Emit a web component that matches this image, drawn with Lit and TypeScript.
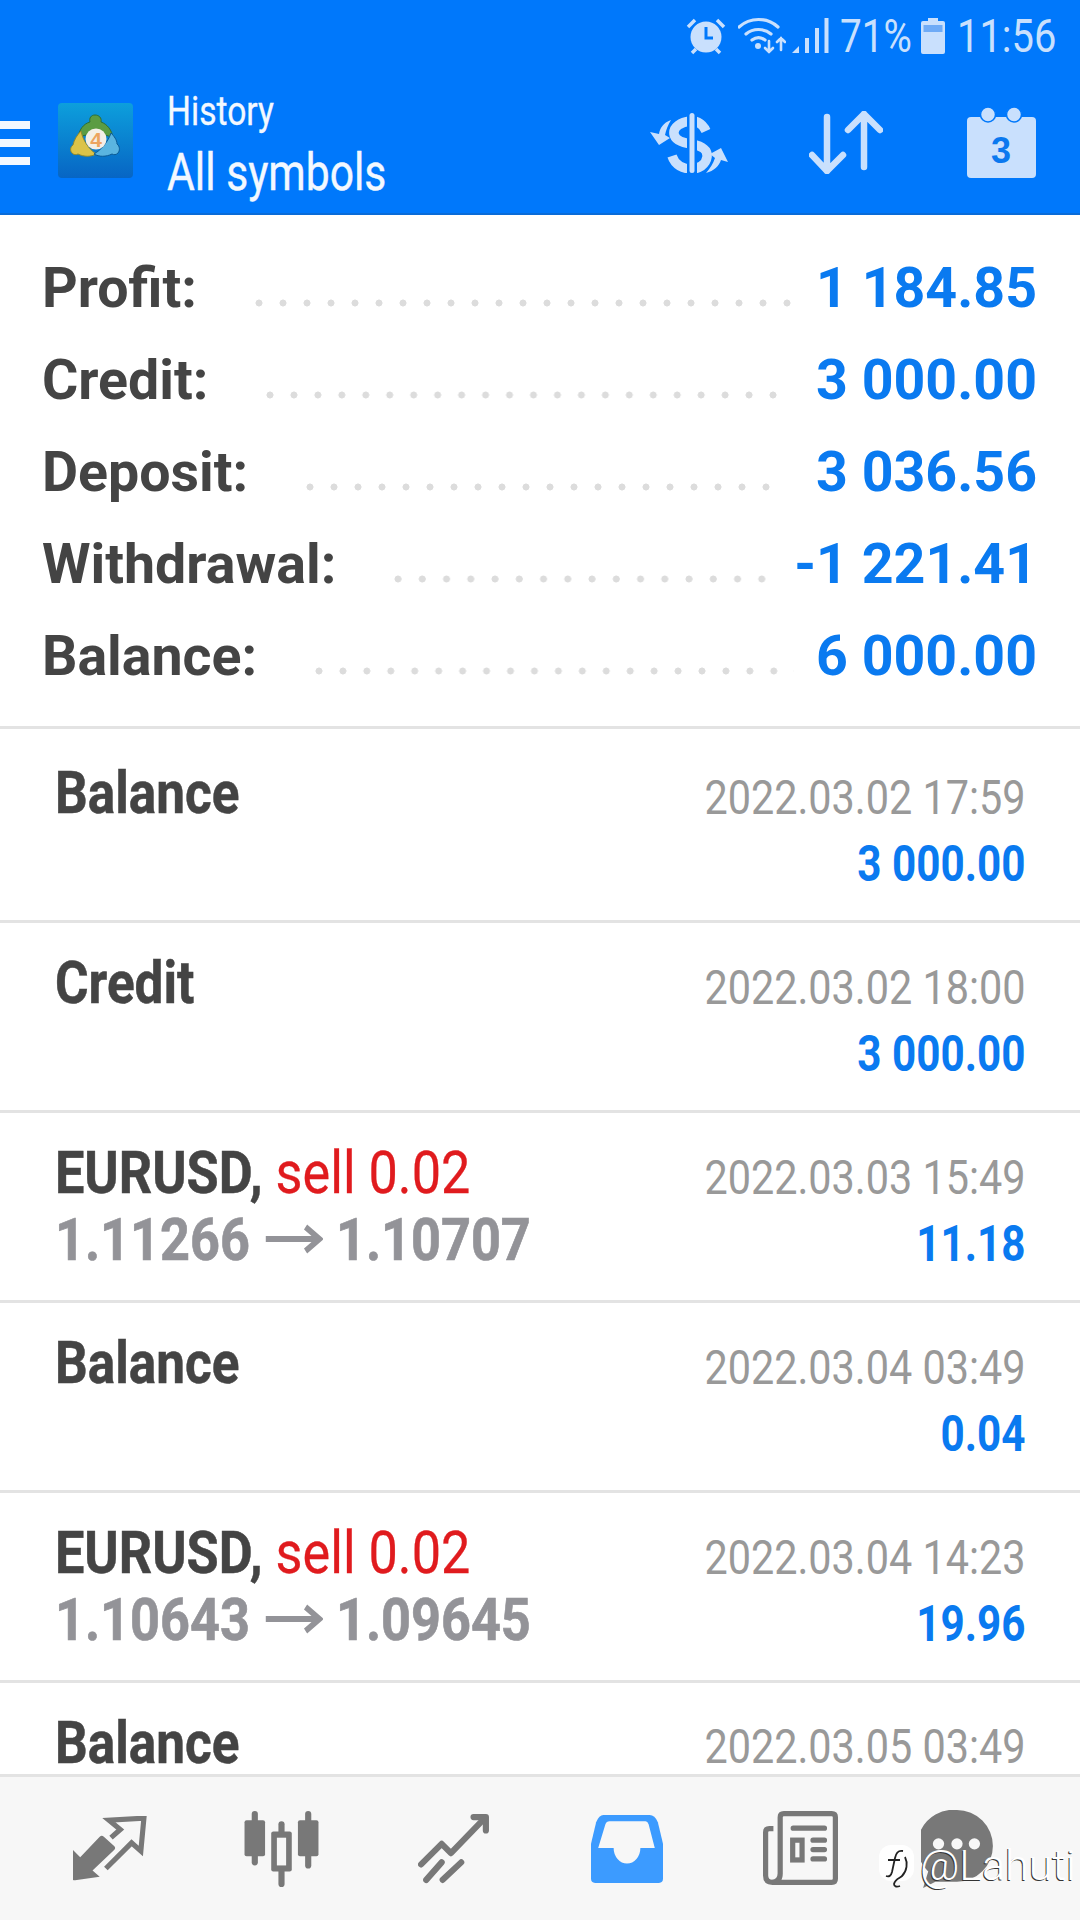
import { LitElement, css, html, svg } from "lit";
import { customElement } from "lit/decorators.js";

const summary = [
  { label: "Profit:", value: "1 184.85", pad: "p-profit" },
  { label: "Credit:", value: "3 000.00", pad: "p-credit" },
  { label: "Deposit:", value: "3 036.56", pad: "p-deposit" },
  { label: "Withdrawal:", value: "-1 221.41", pad: "p-withdrawal" },
  { label: "Balance:", value: "6 000.00", pad: "p-balance" },
];

const rows = [
  { title: "Balance", date: "2022.03.02 17:59", value: "3 000.00" },
  { title: "Credit", date: "2022.03.02 18:00", value: "3 000.00" },
  { title: "EURUSD,", side: "sell 0.02", from: "1.11266", to: "1.10707", date: "2022.03.03 15:49", value: "11.18" },
  { title: "Balance", date: "2022.03.04 03:49", value: "0.04" },
  { title: "EURUSD,", side: "sell 0.02", from: "1.10643", to: "1.09645", date: "2022.03.04 14:23", value: "19.96" },
  { title: "Balance", date: "2022.03.05 03:49", value: "", tail: true },
];

const alarmIcon = svg`<svg width="40" height="38" viewBox="0 0 40 38">
  <circle cx="20" cy="20" r="15.5" fill="#c9e0fd"/>
  <path d="M20 10v11h7" fill="none" stroke="#0078fb" stroke-width="3"/>
  <path d="M2 10 9 3M38 10 31 3M6 36l4-4M34 36l-4-4" stroke="#c9e0fd" stroke-width="3.5" fill="none"/>
</svg>`;

const wifiIcon = svg`<svg width="48" height="38" viewBox="0 0 48 38">
  <g fill="none" stroke="#c9e0fd" stroke-width="3.2" stroke-linecap="round">
    <path d="M1 10C12 0 29 0 40 10"/>
    <path d="M8 17c7-6 18-6 25 0"/>
    <path d="M14 23c4-3 9-3 13 0"/>
    <path d="M31 24v11M27 31l4 4 4-4" stroke-width="2.6"/>
    <path d="M43 33V21M39 25l4-4 4 4" stroke-width="2.6"/>
  </g>
  <circle cx="20" cy="29" r="3" fill="#c9e0fd"/>
</svg>`;

const signalIcon = svg`<svg width="38" height="38" viewBox="0 0 38 38" fill="#c9e0fd">
  <path d="M0 36 7 29v7z"/><rect x="13" y="21" width="4" height="15"/><rect x="23" y="11" width="4" height="25"/><rect x="32.500" y="1" width="4" height="35"/>
</svg>`;

const batteryIcon = svg`<svg width="24" height="36" viewBox="0 0 24 36">
  <path d="M7 0h10v3h5q2 0 2 2v29q0 2-2 2H2q-2 0-2-2V5q0-2 2-2h5z" fill="#c9e0fd"/>
  <rect x="2.500" y="7" width="19" height="7" fill="#6fabf6"/>
</svg>`;

const logoIcon = svg`<svg width="76" height="76" viewBox="0 0 76 76">
  <defs>
    <linearGradient id="lg" x1="0" y1="0" x2="0" y2="1">
      <stop offset="0" stop-color="#0d9fdc"/><stop offset="1" stop-color="#0765c4"/>
    </linearGradient>
  </defs>
  <rect width="75" height="75" rx="4" fill="url(#lg)"/>
  <path d="M37 12c-4 0-6 3-5 7-7 2-11 8-12 16 5-3 11-4 17-3 6-1 13 0 18 3-1-8-6-14-12-16 1-4-2-7-6-7z" fill="#5b9c43" stroke="#2f6f33" stroke-width="1"/>
  <path d="M23 28c-4 4-7 9-8 14-3 2-3 6-1 8 2 2 4 2 6 1 6 3 13 3 18 0-7-5-13-13-15-23z" fill="#dcc348" stroke="#8f8a2e" stroke-width="1"/>
  <path d="M53 30c3 3 6 7 6 11 3 2 3 7 1 9-2 2-4 2-6 1-6 3-13 3-18 0 7-4 14-12 17-21z" fill="#5ab4e0" stroke="#0b5a95" stroke-width="1"/>
  <circle cx="38" cy="36" r="10.500" fill="#f4efe6"/>
  <text x="38" y="44" text-anchor="middle" font-family="Liberation Sans, sans-serif" font-weight="700" font-size="21" fill="#eda45f">4</text>
</svg>`;

const dollarIcon = svg`<svg width="78" height="60" viewBox="0 0 78 60">
  <path d="M56 18C52 9 44 7 40 8 31 9 23 14 24 21c1 7 10 9 18 10 9 2 16 5 15 13-1 8-9 12-15 12-9 0-17-4-20-13" fill="none" stroke="#c9e0fd" stroke-width="9.500"/>
  <rect x="37" y="0" width="10" height="60" fill="#0078fb"/>
  <rect x="39.500" y="0" width="5" height="60" rx="2.500" fill="#c9e0fd"/>
  <path d="M0 19l9 13 11-7-5-3c1-5 3-10 6-15-8 3-11 8-12 14z" fill="#c9e0fd"/>
  <path d="M78 49 71 35l-11 6 5 4c-2 6-5 10-9 15 8-2 13-7 15-13z" fill="#c9e0fd"/>
</svg>`;

const sortIcon = svg`<svg width="74" height="63" viewBox="0 0 74 63" fill="none" stroke="#c9e0fd" stroke-width="6.500" stroke-linecap="round" stroke-linejoin="round">
  <path d="M18 6v54M3 44l15 16 16-16"/>
  <path d="M55 3v53M39 19 55 3l16 16"/>
</svg>`;

const calendarIcon = svg`<svg width="70" height="72" viewBox="0 0 70 72">
  <rect y="10" width="69" height="61" rx="4" fill="#c9e0fd"/>
  <circle cx="21" cy="7.500" r="7.500" fill="#c9e0fd" stroke="#0078fb" stroke-width="1.500"/>
  <circle cx="47" cy="7.500" r="7.500" fill="#c9e0fd" stroke="#0078fb" stroke-width="1.500"/>
  <text x="34" y="56" text-anchor="middle" font-family="Liberation Sans, sans-serif" font-weight="700" font-size="36" fill="#0a78ef">3</text>
</svg>`;

const tradeIcon = svg`<svg width="74" height="66" viewBox="0 0 72 64" fill="#787878">
  <path d="M0 62V33l7 7 19-20q2-2 4 0l10 9q2 2 0 4L19 53l7 6-24 3.500q-2 0-2-.5z"/>
  <path d="M37 21l9-8-11-9 34-2-3 32-9-8-25 25" fill="none" stroke="#787878" stroke-width="5"/>
</svg>`;

const candleIcon = svg`<svg width="75" height="76" viewBox="0 0 72 74" fill="#787878">
  <rect x="7" width="6" height="53" rx="3"/>
  <rect y="9" width="20" height="35" rx="2"/>
  <rect x="33" y="10" width="6" height="64" rx="3"/>
  <rect x="26" y="20" width="20" height="39" rx="2"/>
  <rect x="31.500" y="26" width="9" height="27" fill="#f7f7f7"/>
  <rect x="59" width="6" height="56" rx="3"/>
  <rect x="52" y="9" width="20" height="35" rx="2"/>
</svg>`;

const chartIcon = svg`<svg width="72" height="70" viewBox="0 0 70 68" fill="none" stroke="#787878" stroke-width="6" stroke-linecap="round" stroke-linejoin="round">
  <path d="M3 49 23 29l9 9 31-32"/>
  <path d="M54 3h12v13"/>
  <path d="M8 64 23 47M24 64 42 47"/>
</svg>`;

const inboxIcon = svg`<svg width="72" height="68" viewBox="0 0 70 66">
  <path d="M12 0H57q5 0 8 7l5 21V62q0 4-4 4H4q-4 0-4-4V28L5 7Q8 0 12 0z" fill="#3c9bff"/>
  <path d="M18 6H53q2 0 3 3l6 23H48a13 15 0 0 1-26 0H7L14 9q1-3 4-3z" fill="#f7f7f7"/>
</svg>`;

const newsIcon = svg`<svg width="75" height="75" viewBox="0 0 72 72" fill="none" stroke="#787878" stroke-width="5">
  <path d="M10 17H6q-3.500 0-3.500 3.500V62q0 6.500 6.500 6.500H66q3.500 0 3.500-3.500V6q0-3.500-3.500-3.500H20q-3.500 0-3.500 3.500V60q0 8-8 8.500"/>
  <path d="M29 16.500h30M48 28h11M48 37h11M48 46h11" stroke-linecap="round"/>
  <rect x="28.500" y="28" width="9" height="19" stroke-width="5"/>
</svg>`;

const chatIcon = svg`<svg width="74" height="78" viewBox="0 0 72 76">
  <path d="M35 0a35 35 0 0 1 0 70H14L2 76l5-16A35 35 0 0 1 35 0z" fill="#787878"/>
  <circle cx="17" cy="33" r="5.500" fill="#f7f7f7"/><circle cx="35" cy="33" r="5.500" fill="#f7f7f7"/><circle cx="52" cy="33" r="5.500" fill="#f7f7f7"/>
</svg>`;

const markIcon = svg`<svg width="36" height="46" viewBox="0 0 36 46">
  <rect width="35" height="36" rx="12" fill="#fff"/>
  <path d="M24 6c-5-1-7 2-8 7l-3 14c-1 4-3 5-6 4M9 15h12M26 12c3 6 2 14-3 19-2 2-7 3-8 8 0 3 3 3 6 2" fill="none" stroke="#222" stroke-width="1.800"/>
</svg>`;

const arrowIcon = svg`<svg class="arrow" width="66" height="30" viewBox="0 0 66 30" fill="none" stroke="#939398" stroke-width="6">
  <path d="M0 15h62M46 3l16 12-16 12"/>
</svg>`;

@customElement("app-root")
export class AppRoot extends LitElement {
  static styles = css`
    :host {
      display: block;
      width: 1080px;
      height: 1920px;
      font-family: Roboto, "Liberation Sans", sans-serif;
      background: #fff;
      overflow: hidden;
    }
    .page {
      position: relative;
      display: flex;
      flex-direction: column;
      height: 1920px;
    }
    .c {
      display: inline-block;
      white-space: nowrap;
      transform-origin: left center;
    }
    .top {
      background: #0078fb;
      border-bottom: 2px solid #0a6cd8;
    }
    .status {
      display: flex;
      justify-content: flex-end;
      align-items: center;
      height: 72px;
      padding-right: 26px;
      color: #c9e0fd;
    }
    .status svg { display: block; }
    .s-alarm { margin-right: 12px; }
    .s-wifi { margin-right: 6px; }
    .s-pct {
      width: 81px;
      margin-left: 10px;
      font-size: 46px;
      line-height: 72px;
      transform: scaleX(.842);
    }
    .s-time {
      width: 97px;
      margin-left: 12px;
      font-size: 46px;
      line-height: 72px;
      transform: scaleX(.867);
    }
    .bar {
      display: flex;
      align-items: center;
      height: 141px;
    }
    .burger {
      display: flex;
      flex-direction: column;
      gap: 10px;
      width: 30px;
      margin-right: 28px;
    }
    .burger i {
      display: block;
      height: 8px;
      background: #f3f8ff;
    }
    .logo { display: block; margin-right: 33px; }
    .titles { color: #f3f8ff; flex: 1; padding-top: 7px; }
    .t1 {
      font-size: 40px;
      line-height: 46px;
      transform: scaleX(.84);
      -webkit-text-stroke: .3px currentColor;
    }
    .t2 {
      display: block;
      margin-top: 7px;
      font-size: 52px;
      line-height: 62px;
      transform: scaleX(.82);
      -webkit-text-stroke: .4px currentColor;
    }
    .actions {
      display: flex;
      align-items: center;
      padding-right: 43px;
    }
    .actions svg { display: block; }
    .a-sort { margin: 0 84px 0 81px; }
    .summary {
      padding: 27px 43px 24px 42px;
      border-bottom: 3px solid #e3e3e3;
    }
    .sum-row {
      display: flex;
      align-items: center;
      height: 92px;
      font-weight: 700;
      font-size: 55.5px;
    }
    .sum-label { color: #444; }
    .sum-value { color: #0a7af0; }
    .dots {
      flex: 1;
      align-self: flex-end;
      height: 8px;
      margin: 0 9px 27px 58px;
      background: radial-gradient(circle at 4px 4px, #dcdcdc 3.2px, transparent 3.8px) left center / 24px 8px round no-repeat;
    }
    .p-credit .dots { margin-right: 23px; }
    .p-deposit .dots { margin-right: 30px; }
    .p-withdrawal .dots { margin-right: 12px; }
    .p-balance .dots { margin-right: 22px; }
    .list { flex: 1; padding-top: 4px; }
    .row {
      display: flex;
      justify-content: space-between;
      box-sizing: border-box;
      height: 190px;
      padding: 23px 54px 0 55px;
      border-bottom: 3px solid #e3e3e3;
    }
    .lines { font-size: 60px; line-height: 66px; padding-top: 4px; }
    .name {
      display: block;
      font-weight: 700;
      color: #444;
      transform: scaleX(.87);
      -webkit-text-stroke: .5px currentColor;
    }
    .single .name { transform: scaleX(.855); }
    .sell { font-weight: 400; color: #e01b1e; -webkit-text-stroke: .3px currentColor; }
    .price {
      display: block;
      margin-top: 1px;
      font-weight: 700;
      color: #939398;
      transform: scaleX(.87);
      -webkit-text-stroke: .7px currentColor;
    }
    .arrow {
      margin: 0 15px 0 18px;
      vertical-align: 6px;
    }
    .meta { text-align: right; }
    .meta .c { transform-origin: right center; }
    .date {
      display: block;
      font-size: 48px;
      line-height: 67px;
      margin-top: 8px;
      color: #999;
      transform: scaleX(.862);
    }
    .amount {
      display: block;
      font-size: 50px;
      font-weight: 700;
      line-height: 67px;
      color: #0a7af0;
      transform: scaleX(.845);
    }
    /* last row runs into the nav, keep its line boxes inside the list */
    .tail { height: 90px; border-bottom: none; }
    .tail .lines { line-height: 50px; padding-top: 12px; }
    .tail .date { line-height: 50px; margin-top: 16px; }
    .nav {
      display: grid;
      grid-template-columns: 180px 163px 182px 164px 182px 134px;
      align-items: center;
      justify-items: center;
      height: 143px;
      padding-left: 20px;
      background: #f7f7f7;
      border-top: 3px solid #e3e3e3;
    }
    .nav svg { display: block; }
    .mark {
      position: absolute;
      left: 879px;
      top: 1845px;
      display: flex;
      gap: 5px;
      color: #fff;
      font-size: 43px;
      font-weight: 300;
      line-height: 40px;
      text-shadow: -1px 1px 0 #333;
    }
    .mark svg { display: block; }
  `;

  renderRow(r: any) {
    return html`<div class="row ${r.tail ? "tail" : ""}">
      <div class="lines ${r.from ? "" : "single"}">
        <span class="c name">${r.title}${r.side ? html` <span class="sell">${r.side}</span>` : ""}</span>
        ${r.from ? html`<span class="c price">${r.from}${arrowIcon}${r.to}</span>` : ""}
      </div>
      <div class="meta">
        <span class="c date">${r.date}</span>
        ${r.value ? html`<span class="c amount">${r.value}</span>` : ""}
      </div>
    </div>`;
  }

  render() {
    return html`<div class="page">
      <header class="top">
        <div class="status">
          <span class="s-alarm">${alarmIcon}</span>
          <span class="s-wifi">${wifiIcon}</span>
          ${signalIcon}
          <span class="c s-pct">71%</span>
          ${batteryIcon}
          <span class="c s-time">11:56</span>
        </div>
        <div class="bar">
          <div class="burger"><i></i><i></i><i></i></div>
          <div class="logo">${logoIcon}</div>
          <div class="titles">
            <span class="c t1">History</span>
            <span class="c t2">All symbols</span>
          </div>
          <div class="actions">
            ${dollarIcon}
            <span class="a-sort">${sortIcon}</span>
            ${calendarIcon}
          </div>
        </div>
      </header>
      <section class="summary">
        ${summary.map(
          (s) => html`<div class="sum-row ${s.pad}">
            <span class="sum-label">${s.label}</span>
            <span class="dots"></span>
            <span class="sum-value">${s.value}</span>
          </div>`
        )}
      </section>
      <section class="list">${rows.map((r) => this.renderRow(r))}</section>
      <nav class="nav">
        ${tradeIcon} ${candleIcon} ${chartIcon} ${inboxIcon} ${newsIcon} ${chatIcon}
      </nav>
      <div class="mark">${markIcon}<span>@Lahuti</span></div>
    </div>`;
  }
}
